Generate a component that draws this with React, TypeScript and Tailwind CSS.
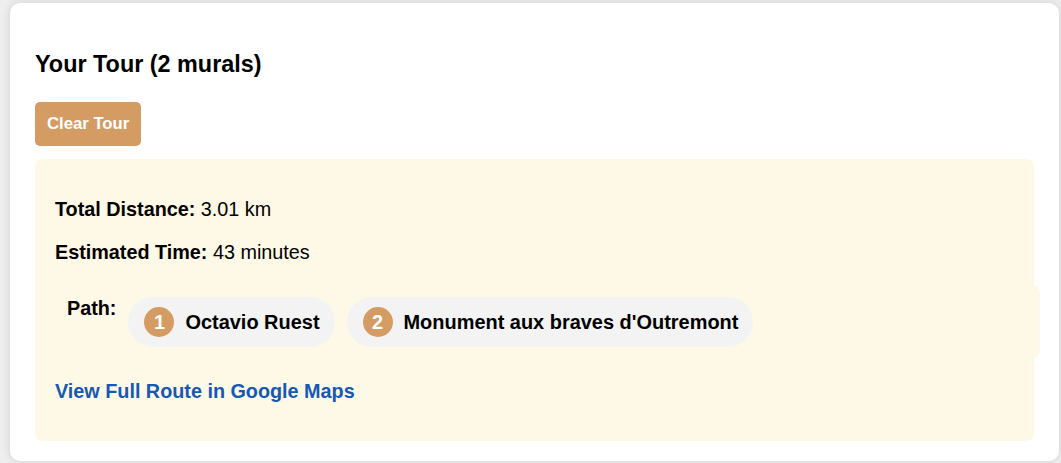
import React from "react";

export default function App() {
  const stops = ["Octavio Ruest", "Monument aux braves d'Outremont"];
  return (
    <div
      className="min-h-[463px] bg-[#eeeeee] pl-[10px] pr-[2px] pt-[3px] text-black"
      style={{ fontFamily: '"Liberation Sans", Arial, Helvetica, sans-serif' }}
    >
      <div className="rounded-[10px] bg-white px-[25px] pb-[20px] pt-[48px] shadow-[0_0_10px_rgba(0,0,0,0.12)]">
        <h2 className="text-[23.4px] font-bold leading-[26px]">Your Tour (2 murals)</h2>
        <button className="mt-[25px] flex h-[44px] items-center rounded-[5px] bg-[#d49c63] px-[12px] text-[16.7px] font-bold text-white">
          Clear Tour
        </button>
        <div className="mt-[13px] flex flex-col rounded-[8px] bg-[#fef8e6] px-[20px] pb-[38px] pt-[39px] text-[19.8px] leading-[23px]">
          <p>
            <strong>Total Distance:</strong> 3.01 km
          </p>
          <p className="mt-[20px]">
            <strong>Estimated Time:</strong> 43 minutes
          </p>
          <div className="mt-[21px] flex w-[calc(100%+26px)] items-start gap-[12px] rounded-[8px] bg-[#fef8e6] pb-[11px] pl-[12px] pr-[12px] pt-[12px]">
            <span className="font-bold">Path:</span>
            {stops.map((s, i) => (
              <div
                key={s}
                className="flex h-[50px] items-center gap-[11px] rounded-full bg-[#f3f3f3] pl-[16px] pr-[15px] text-[19.95px]"
              >
                <span className="flex h-[30px] w-[30px] items-center justify-center rounded-full bg-[#d49c63] font-bold text-white">
                  {i + 1}
                </span>
                <span className="font-bold">{s}</span>
              </div>
            ))}
          </div>
          <p className="mt-[22px]">
            <a href="#" className="font-bold text-[#1559b3]">
              View Full Route in Google Maps
            </a>
          </p>
        </div>
      </div>
    </div>
  );
}
